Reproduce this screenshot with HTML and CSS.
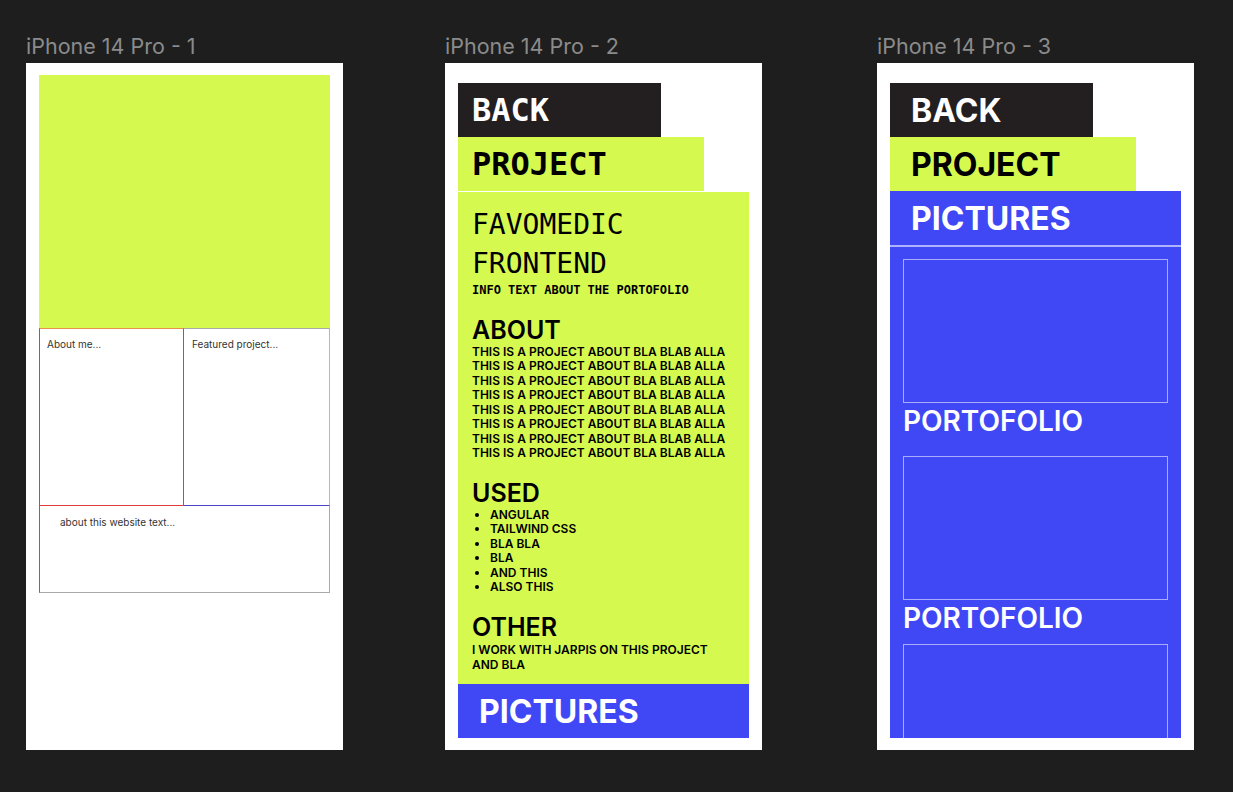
FILE: index.html
```html
<!DOCTYPE html>
<html lang="en">
<head>
  <meta charset="UTF-8" />
  <meta name="viewport" content="width=device-width, initial-scale=1.0"/>
  <title>Portfolio mockups</title>
  <link rel="stylesheet" href="styles.css">
</head>
<body>

  <div class="canvas">

    <!-- home screen -->
    <section class="artboard">
      <div class="artboard-label">iPhone 14 Pro - 1</div>
      <div class="screen screen-home">
        <div class="hero"></div>
        <div class="home-grid">
          <div class="home-card card-about">About me...</div>
          <div class="home-card card-featured">Featured project...</div>
        </div>
        <div class="home-site">about this website text...</div>
      </div>
    </section>

    <!-- project screen -->
    <section class="artboard">
      <div class="artboard-label">iPhone 14 Pro - 2</div>
      <div class="screen screen-inner">
        <div class="tab tab-back tab-mono">BACK</div>
        <div class="tab tab-project tab-mono">PROJECT</div>
        <div class="project-body">
          <h1 class="project-title">FAVOMEDIC<br />FRONTEND</h1>
          <p class="project-info">INFO TEXT ABOUT THE PORTOFOLIO</p>

          <h3>ABOUT</h3>
          <p>
            THIS IS A PROJECT ABOUT BLA BLAB ALLA<br />
            THIS IS A PROJECT ABOUT BLA BLAB ALLA<br />
            THIS IS A PROJECT ABOUT BLA BLAB ALLA<br />
            THIS IS A PROJECT ABOUT BLA BLAB ALLA<br />
            THIS IS A PROJECT ABOUT BLA BLAB ALLA<br />
            THIS IS A PROJECT ABOUT BLA BLAB ALLA<br />
            THIS IS A PROJECT ABOUT BLA BLAB ALLA<br />
            THIS IS A PROJECT ABOUT BLA BLAB ALLA
          </p>

          <h3>USED</h3>
          <ul>
            <li>ANGULAR</li>
            <li>TAILWIND CSS</li>
            <li>BLA BLA</li>
            <li>BLA</li>
            <li>AND THIS</li>
            <li>ALSO THIS</li>
          </ul>

          <h3>OTHER</h3>
          <p class="other">I WORK WITH JARPIS ON THIS PROJECT AND BLA</p>
        </div>
        <div class="tab tab-pictures">PICTURES</div>
      </div>
    </section>

    <!-- pictures screen -->
    <section class="artboard artboard-last">
      <div class="artboard-label">iPhone 14 Pro - 3</div>
      <div class="screen screen-inner">
        <div class="tab tab-back">BACK</div>
        <div class="tab tab-project">PROJECT</div>
        <div class="tab tab-pictures">PICTURES</div>
        <div class="gallery">
          <div class="shot"></div>
          <p class="shot-caption">PORTOFOLIO</p>
          <div class="shot"></div>
          <p class="shot-caption shot-caption-tight">PORTOFOLIO</p>
          <div class="shot"></div>
        </div>
      </div>
    </section>

  </div>

</body>
</html>
```

FILE: styles.css
```css
html, body {
  height: 100%;
  margin: 0;
  font-family: 'Inter', 'Noto Sans', sans-serif;
  background-color: #1e1e1e;
}

.canvas {
  display: flex;
  align-items: flex-start;
  padding: 33px 0 0 26px;
}

.artboard + .artboard {
  margin-left: 102px;
}

.artboard-last.artboard {
  margin-left: 115px;
}

.artboard-label {
  color: #8b8b8b;
  font-size: 21.5px;
  line-height: 26px;
  margin: 0 0 4px 0;
}

.screen {
  width: 317px;
  height: 687px;
  box-sizing: border-box;
  background-color: #fff;
  display: flex;
  flex-direction: column;
}

/* home */
.screen-home {
  padding: 12px 13px;
}

.hero {
  height: 253px;
  background-color: #d6f950;
}

.home-grid {
  display: grid;
  grid-template-columns: 145px 1fr;
  height: 178px;
}

.home-card {
  box-sizing: border-box;
  font-size: 10px;
  line-height: 12px;
  color: #333;
}

.card-about {
  border: 1px solid #e03c3c;
  border-top-color: #e8914f;
  padding: 9px 7px;
}

.card-featured {
  border-top: 1px solid #a8a8a8;
  border-right: 1px solid #b7aaf8;
  border-bottom: 1px solid #4a47c4;
  padding: 9px 8px;
}

.home-site {
  height: 87px;
  box-sizing: border-box;
  border: 1px solid #6f6f6f;
  border-top: none;
  border-right-color: #a9a9a9;
  border-bottom-color: #a9a9a9;
  padding: 10px 20px;
  font-size: 10px;
  line-height: 12px;
  color: #333;
}

/* tabs */
.screen-inner {
  padding: 20px 13px 12px;
}

.tab {
  height: 54px;
  flex-shrink: 0;
  box-sizing: border-box;
  display: flex;
  align-items: center;
  padding-left: 21px;
  font-size: 32px;
  font-weight: 700;
}

.tab-mono {
  font-family: 'DejaVu Sans Mono', monospace;
  padding-left: 14px;
}

.tab-back {
  width: 203px;
  background-color: #231f20;
  color: #fff;
}

.tab-project {
  width: 246px;
  background-color: #d6f950;
  color: #000;
}

.tab-pictures {
  background-color: #4048f5;
  color: #fff;
}

/* project details */
.project-body {
  flex: 1;
  margin-top: 1px;
  padding: 13px 14px 0;
  background-color: #d6f950;
  color: #000;
}

.project-title {
  font-family: 'DejaVu Sans Mono', monospace;
  font-size: 28px;
  font-weight: 400;
  line-height: 39px;
  margin: 0;
}

.project-info {
  font-family: 'DejaVu Sans Mono', monospace;
  font-size: 12px;
  font-weight: 400;
  line-height: 14px;
  margin: 0;
}

.project-body h3 {
  font-size: 25px;
  font-weight: 600;
  line-height: 30px;
  margin: 17px 0 0;
}

.project-body p,
.project-body li {
  font-size: 12px;
  font-weight: 600;
  line-height: 14.5px;
  margin: 0;
}

.project-body ul {
  margin: 0;
  padding-left: 18px;
}

.project-body .other {
  line-height: 15px;
}

/* pictures */
.gallery {
  flex: 1;
  min-height: 0;
  overflow: hidden;
  background-color: #4048f5;
  border-top: 2px solid #aeb3fb;
  padding: 12px 13px 0;
}

.shot {
  height: 144px;
  box-sizing: border-box;
  border: 1px solid rgba(255, 255, 255, 0.55);
}

.shot-caption {
  color: #fff;
  font-size: 28px;
  font-weight: 600;
  line-height: 36px;
  margin: 0 0 17px;
}

.shot-caption-tight {
  margin-bottom: 8px;
}
```
